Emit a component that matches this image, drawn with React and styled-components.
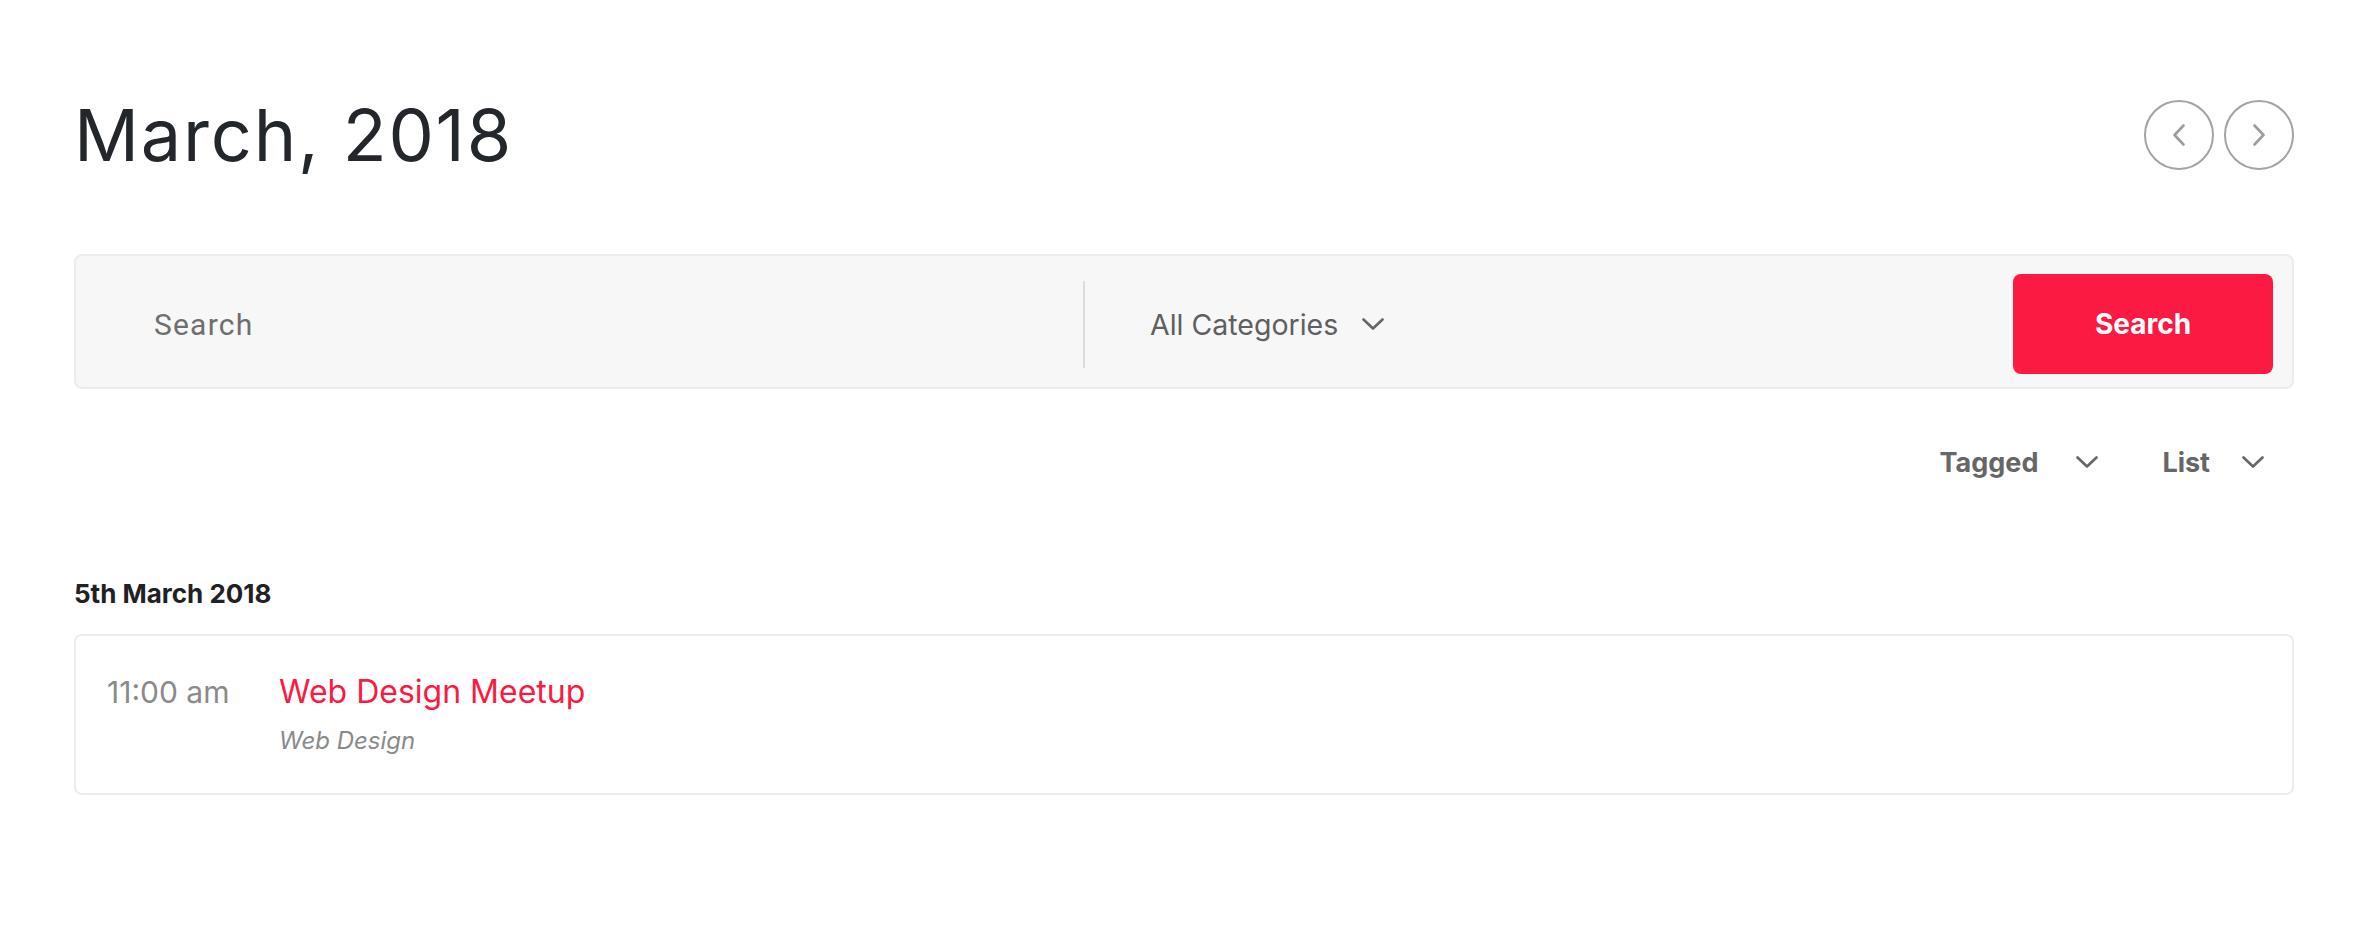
import React from "react";
import styled, { createGlobalStyle } from "styled-components";

const Global = createGlobalStyle`
  html, body { margin: 0; padding: 0; background: #ffffff; }
  body { font-family: "Inter", "Noto Sans", sans-serif; color: #222; }
  * { box-sizing: border-box; }
`;

const Page = styled.div`
  padding: 100px 68px 0 74px;
  min-height: 944px;
`;

const Header = styled.header`
  display: flex;
  align-items: center;
  justify-content: space-between;
  height: 70px;
`;

const Title = styled.h1`
  margin: 0;
  font-family: "Inter", sans-serif;
  font-weight: 400;
  font-size: 72px;
  letter-spacing: 1.8px;
  color: #23262b;
  line-height: 1;
`;

const NavGroup = styled.div`
  display: flex;
  gap: 10px;
`;

const NavButton = styled.button`
  width: 70px;
  height: 70px;
  border-radius: 50%;
  border: 2px solid #a3a3a3;
  background: #fff;
  display: flex;
  align-items: center;
  justify-content: center;
  padding: 0;
  cursor: pointer;
`;

const SearchBar = styled.form`
  margin-top: 84px;
  height: 135px;
  background: #f7f7f7;
  border: 2px solid #ececec;
  border-radius: 8px;
  display: flex;
  align-items: center;
  padding: 18px 19px 13px 0;
`;

const SearchField = styled.div`
  width: 1007px;
  padding-left: 78px;
  font-family: "Roboto", sans-serif;
  font-size: 30px;
  letter-spacing: 1.2px;
  color: #6e6e6e;
`;

const Divider = styled.div`
  width: 2px;
  height: 87px;
  background: #dcdcdc;
`;

const CategorySelect = styled.div`
  flex: 1;
  display: flex;
  align-items: center;
  padding-left: 65px;
  font-size: 28.5px;
  color: #5f5f5f;
  gap: 24px;
`;

const SearchButton = styled.button`
  width: 260px;
  height: 100px;
  border: none;
  border-radius: 8px;
  background: #fb1a41;
  color: #fff;
  font-family: "Inter", sans-serif;
  font-weight: 700;
  font-size: 28px;
  cursor: pointer;
`;

const Filters = styled.div`
  margin-top: 53px;
  height: 40px;
  display: flex;
  justify-content: flex-end;
  align-items: center;
  gap: 64px;
  padding-right: 30px;
`;

const Filter = styled.div`
  display: flex;
  align-items: center;
  gap: ${(p) => p.$gap}px;
  font-weight: 700;
  font-size: 27px;
  color: #666;
`;

const DateHeading = styled.h3`
  margin: 97px 0 0 0;
  font-size: 26px;
  font-weight: 700;
  color: #1f2124;
  line-height: 30px;
`;

const EventCard = styled.div`
  margin-top: 25px;
  height: 161px;
  border: 2px solid #ececec;
  border-radius: 8px;
  display: flex;
  padding: 38px 0 0 31px;
`;

const Time = styled.div`
  width: 172px;
  font-size: 30px;
  color: #8a8a8a;
  line-height: 36px;
`;

const EventInfo = styled.div`
  display: flex;
  flex-direction: column;
  gap: 16px;
`;

const EventTitle = styled.a`
  font-size: 32px;
  color: #fb1a41;
  text-decoration: none;
  line-height: 36px;
`;

const EventCategory = styled.div`
  font-size: 24px;
  font-style: italic;
  color: #8a8a8a;
`;

const Chevron = ({ color = "#666", w = 22, h = 12, sw = 2.6 }) => (
  <svg width={w} height={h} viewBox="0 0 22 12" fill="none">
    <path d="M1.5 1.5 L11 10.5 L20.5 1.5" stroke={color} strokeWidth={sw} strokeLinecap="round" strokeLinejoin="round" />
  </svg>
);

const Arrow = ({ dir }) => (
  <svg width="14" height="24" viewBox="0 0 14 24" fill="none">
    <path
      d={dir === "left" ? "M11.5 2.5 L2.5 12 L11.5 21.5" : "M2.5 2.5 L11.5 12 L2.5 21.5"}
      stroke="#9c9c9c"
      strokeWidth="2.6"
      strokeLinecap="round"
      strokeLinejoin="round"
    />
  </svg>
);

export default function App() {
  return (
    <>
      <Global />
      <Page>
        <Header>
          <Title>March, 2018</Title>
          <NavGroup>
            <NavButton aria-label="Previous month"><Arrow dir="left" /></NavButton>
            <NavButton aria-label="Next month"><Arrow dir="right" /></NavButton>
          </NavGroup>
        </Header>

        <SearchBar onSubmit={(e) => e.preventDefault()}>
          <SearchField>Search</SearchField>
          <Divider />
          <CategorySelect>
            All Categories
            <Chevron />
          </CategorySelect>
          <SearchButton type="submit">Search</SearchButton>
        </SearchBar>

        <Filters>
          <Filter $gap={38}>
            Tagged
            <Chevron />
          </Filter>
          <Filter $gap={32}>
            List
            <Chevron />
          </Filter>
        </Filters>

        <DateHeading>5th March 2018</DateHeading>

        <EventCard>
          <Time>11:00 am</Time>
          <EventInfo>
            <EventTitle href="#">Web Design Meetup</EventTitle>
            <EventCategory>Web Design</EventCategory>
          </EventInfo>
        </EventCard>
      </Page>
    </>
  );
}
